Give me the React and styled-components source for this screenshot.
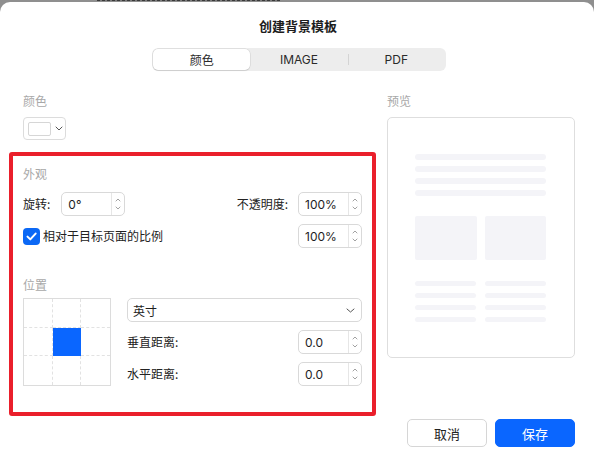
import React from "react";
import styled, { createGlobalStyle } from "styled-components";

// STYLES
const GlobalStyle = createGlobalStyle`
  html, body {
    margin: 0;
    padding: 0;
    background: #8f8f8f;
  }
  * {
    box-sizing: border-box;
  }
  body {
    font-family: "Noto Sans CJK SC", "Inter", "Liberation Sans", sans-serif;
    color: #222;
  }
`;

const Backdrop = styled.div`
  position: relative;
  width: 594px;
  height: 461px;
  padding-top: 2px;
  overflow: hidden;
  background: #8f8f8f;
`;

const BehindText = styled.div`
  position: absolute;
  top: 0;
  left: 97px;
  width: 183px;
  height: 1px;
  background: repeating-linear-gradient(90deg, #3a3a3a 0 3px, #7a7a7a 3px 5px);
`;

const Dialog = styled.div`
  height: 100%;
  background: #fff;
  border-radius: 10px 10px 0 0;
  display: flex;
  flex-direction: column;
  align-items: center;
`;

const Title = styled.h1`
  margin: 15px 0 0 2px;
  font-size: 13px;
  line-height: 18px;
  font-weight: 700;
  color: #1d1d1d;
`;

const Tabs = styled.div`
  margin: 13px 0 0 4px;
  width: 294px;
  height: 23px;
  padding: 1px;
  border-radius: 6px;
  background: #ededed;
  display: flex;
  align-items: center;
`;

const Tab = styled.div`
  position: relative;
  flex: 1;
  height: 21px;
  display: flex;
  align-items: center;
  justify-content: center;
  font-family: "Inter", "Noto Sans CJK SC", sans-serif;
  font-size: 12px;
  font-weight: 400;
  color: #2a2a2a;
  border-radius: 5px;
  background: ${(p) => (p.$active ? "#fff" : "transparent")};
  box-shadow: ${(p) =>
    p.$active ? "0 0 0 0.5px rgba(0,0,0,0.12), 0 1px 1px rgba(0,0,0,0.08)" : "none"};

  &::before {
    content: "";
    display: ${(p) => (p.$divider ? "block" : "none")};
    position: absolute;
    left: 0;
    top: 5px;
    height: 11px;
    width: 1px;
    background: #d4d4d4;
  }
`;

const Body = styled.div`
  width: 100%;
  margin-top: 22px;
  padding: 0 19px 0 9px;
  display: flex;
  align-items: flex-start;
  gap: 11px;
`;

const LeftCol = styled.div`
  width: 367px;
  display: flex;
  flex-direction: column;
`;

const RightCol = styled.div`
  width: 188px;
  display: flex;
  flex-direction: column;
`;

const Caption = styled.div`
  font-size: 12px;
  line-height: 16px;
  color: #a8a8a8;
  margin-left: ${(p) => p.$indent || 0}px;
  margin-top: ${(p) => p.$top || 0}px;
`;

const ColorPicker = styled.div`
  margin: 8px 0 0 14px;
  width: 43px;
  height: 23px;
  border: 1px solid #dcdcdc;
  border-radius: 4px;
  display: flex;
  align-items: center;
  padding-left: 4px;
  gap: 4px;
`;

const Swatch = styled.div`
  width: 23px;
  height: 14px;
  border: 1px solid #d6d6d6;
  border-radius: 2px;
  background: #fff;
`;

const Highlight = styled.section`
  margin-top: 12px;
  width: 367px;
  border: 4px solid #ea1f2b;
  border-radius: 3px;
  padding: 10px 10px 26px;
  display: flex;
  flex-direction: column;
`;

const Row = styled.div`
  margin-top: ${(p) => p.$top || 0}px;
  height: 24px;
  display: flex;
  align-items: center;
  justify-content: space-between;
`;

const Group = styled.div`
  display: flex;
  align-items: center;
`;

const Label = styled.span`
  font-size: 12px;
  line-height: 16px;
  color: #222;
  margin-right: ${(p) => p.$gap || 0}px;
  white-space: nowrap;
`;

const Field = styled.div`
  width: 64px;
  height: 24px;
  border: 1px solid #d9d9d9;
  border-radius: 5px;
  display: flex;
  align-items: stretch;
  background: #fff;
`;

const FieldValue = styled.div`
  flex: 1;
  display: flex;
  align-items: center;
  padding-left: 6px;
  font-family: "Inter", "Liberation Sans", sans-serif;
  font-size: 12px;
  color: #1e1e1e;
`;

const Stepper = styled.div`
  width: 13px;
  border-left: 1px solid #e6e6e6;
  display: flex;
  flex-direction: column;
  align-items: center;
  justify-content: space-around;
  padding: 3px 0;
`;

const CheckBox = styled.div`
  width: 17px;
  height: 17px;
  border-radius: 4px;
  background: #0b68f5;
  display: flex;
  align-items: center;
  justify-content: center;
  margin-right: 3px;
`;

const PositionRow = styled.div`
  margin-top: 5px;
  display: flex;
  gap: 16px;
`;

const PosGrid = styled.div`
  width: 88px;
  height: 88px;
  border: 1px solid #dcdcdc;
  display: grid;
  grid-template-columns: repeat(3, 1fr);
  grid-template-rows: repeat(3, 1fr);
`;

const cellLine = (show, active) =>
  show ? `1px ${active ? "solid #0a66ff" : "dashed #e2e2e2"}` : "none";

const PosCell = styled.div`
  border-right: ${(p) => cellLine(p.$col < 2, p.$active)};
  border-bottom: ${(p) => cellLine(p.$row < 2, p.$active)};
  background: ${(p) => (p.$active ? "#0a66ff" : "transparent")};
`;

const Controls = styled.div`
  flex: 1;
  display: flex;
  flex-direction: column;
  gap: 8px;
`;

const Select = styled.div`
  height: 24px;
  border: 1px solid #d9d9d9;
  border-radius: 5px;
  display: flex;
  align-items: center;
  justify-content: space-between;
  padding: 0 6px 0 5px;
  font-size: 12px;
  color: #1e1e1e;
`;

const Preview = styled.div`
  margin-top: 8px;
  height: 241px;
  border: 1px solid #dedede;
  border-radius: 5px;
  padding: 36px 28px 0 27px;
  display: flex;
  flex-direction: column;
`;

const Lines = styled.div`
  display: flex;
  flex-direction: column;
  gap: ${(p) => p.$gap}px;
`;

const Line = styled.div`
  height: ${(p) => p.$h}px;
  border-radius: 3px;
  background: #f4f4f8;
`;

const Blocks = styled.div`
  margin-top: ${(p) => p.$top}px;
  display: grid;
  grid-template-columns: 1fr 1fr;
  gap: ${(p) => p.$gap}px;
`;

const Block = styled.div`
  height: 44px;
  border-radius: 2px;
  background: #f4f4f8;
`;

const Footer = styled.div`
  margin-top: 61px;
  display: flex;
  justify-content: flex-end;
  gap: 8px;
`;

const Button = styled.button`
  width: 80px;
  height: 28px;
  border-radius: 5px;
  font-family: "Noto Sans CJK SC", sans-serif;
  font-size: 13px;
  border: 1px solid ${(p) => (p.$primary ? "#0a66ff" : "#d6d6d6")};
  background: ${(p) => (p.$primary ? "#0a66ff" : "#fff")};
  color: ${(p) => (p.$primary ? "#fff" : "#222")};
`;
//END STYLES

function Chevron({ up }) {
  return (
    <svg width="6" height="4" viewBox="0 0 6 4">
      <path
        d={up ? "M1 3L3 1 5 3" : "M1 1L3 3 5 1"}
        fill="none"
        stroke="#8a8a8a"
        strokeWidth="0.8"
        strokeLinecap="round"
        strokeLinejoin="round"
      />
    </svg>
  );
}

function NumberField({ value }) {
  return (
    <Field>
      <FieldValue>{value}</FieldValue>
      <Stepper>
        <Chevron up />
        <Chevron />
      </Stepper>
    </Field>
  );
}

export default function App() {
  const cells = [];
  for (let r = 0; r < 3; r++) {
    for (let c = 0; c < 3; c++) {
      cells.push(<PosCell key={`${r}-${c}`} $row={r} $col={c} $active={r === 1 && c === 1} />);
    }
  }

  return (
    <>
      <GlobalStyle />
      <Backdrop>
        <BehindText />
        <Dialog>
          <Title>创建背景模板</Title>
          <Tabs>
            <Tab $active>颜色</Tab>
            <Tab>IMAGE</Tab>
            <Tab $divider>PDF</Tab>
          </Tabs>

          <Body>
            <LeftCol>
              <Caption $indent={14}>颜色</Caption>
              <ColorPicker>
                <Swatch />
                <svg width="8" height="5" viewBox="0 0 8 5">
                  <path d="M1 1l3 3 3-3" fill="none" stroke="#555" strokeWidth="1" strokeLinecap="round" />
                </svg>
              </ColorPicker>

              <Highlight>
                <Caption>外观</Caption>
                <Row $top={10}>
                  <Group>
                    <Label $gap={11}>旋转:</Label>
                    <NumberField value="0°" />
                  </Group>
                  <Group>
                    <Label $gap={10}>不透明度:</Label>
                    <NumberField value="100%" />
                  </Group>
                </Row>
                <Row $top={8}>
                  <Group>
                    <CheckBox>
                      <svg width="11" height="9" viewBox="0 0 11 9">
                        <path d="M1.5 4.6l2.8 2.8L9.6 1.6" fill="none" stroke="#fff" strokeWidth="2" strokeLinecap="round" strokeLinejoin="round" />
                      </svg>
                    </CheckBox>
                    <Label>相对于目标页面的比例</Label>
                  </Group>
                  <NumberField value="100%" />
                </Row>

                <Caption $top={29}>位置</Caption>
                <PositionRow>
                  <PosGrid>{cells}</PosGrid>
                  <Controls>
                    <Select>
                      <span>英寸</span>
                      <svg width="9" height="5" viewBox="0 0 9 5">
                        <path d="M1 1l3.5 3L8 1" fill="none" stroke="#555" strokeWidth="1" strokeLinecap="round" />
                      </svg>
                    </Select>
                    <Row>
                      <Label>垂直距离:</Label>
                      <NumberField value="0.0" />
                    </Row>
                    <Row>
                      <Label>水平距离:</Label>
                      <NumberField value="0.0" />
                    </Row>
                  </Controls>
                </PositionRow>
              </Highlight>
            </LeftCol>

            <RightCol>
              <Caption>预览</Caption>
              <Preview>
                <Lines $gap={6}>
                  <Line $h={6} />
                  <Line $h={6} />
                  <Line $h={6} />
                  <Line $h={6} />
                </Lines>
                <Blocks $top={20} $gap={8}>
                  <Block />
                  <Block />
                </Blocks>
                <Blocks $top={21} $gap={9}>
                  <Lines $gap={7}>
                    <Line $h={5} />
                    <Line $h={5} />
                    <Line $h={5} />
                    <Line $h={5} />
                  </Lines>
                  <Lines $gap={7}>
                    <Line $h={5} />
                    <Line $h={5} />
                    <Line $h={5} />
                    <Line $h={5} />
                  </Lines>
                </Blocks>
              </Preview>
              <Footer>
                <Button>取消</Button>
                <Button $primary>保存</Button>
              </Footer>
            </RightCol>
          </Body>
        </Dialog>
      </Backdrop>
    </>
  );
}
